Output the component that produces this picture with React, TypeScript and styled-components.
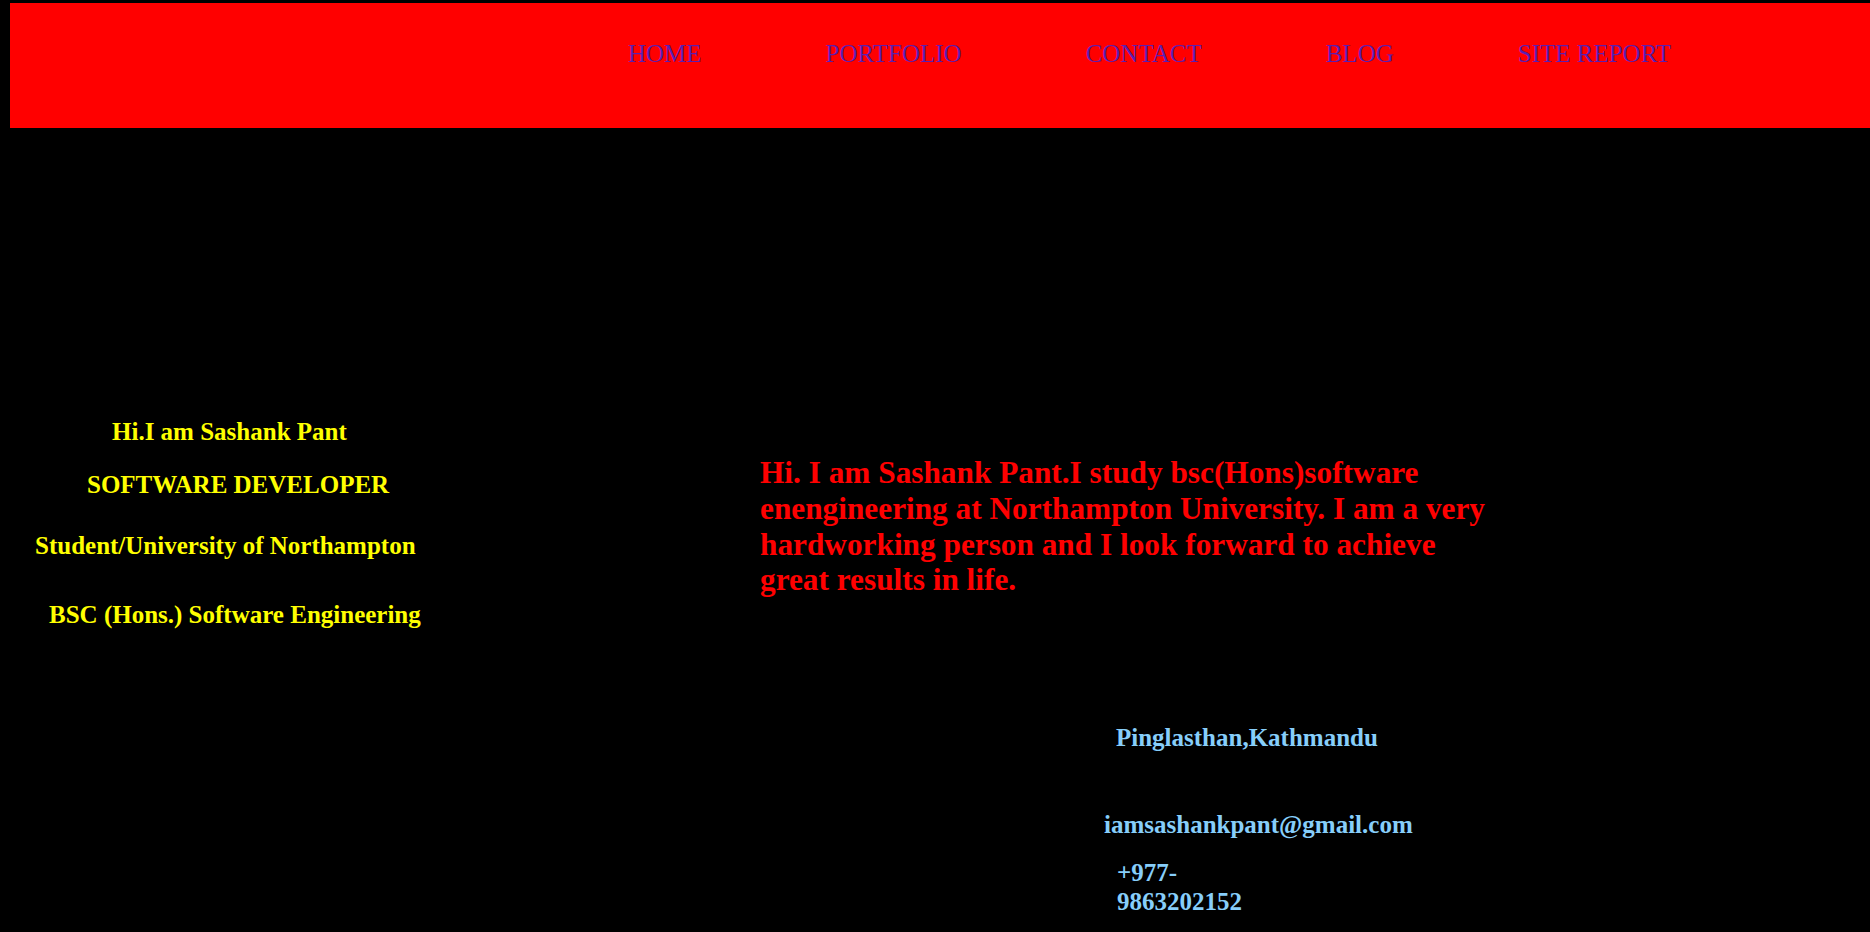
import React from "react";
import styled, { createGlobalStyle } from "styled-components";

const GlobalStyle = createGlobalStyle`
  html, body {
    margin: 0;
    padding: 0;
    background: #000000;
    overflow: hidden;
  }
  body {
    font-family: "Liberation Serif", "Times New Roman", serif;
  }
`;

const Page = styled.div`
  min-height: 932px;
  background: #000000;
`;

const Header = styled.header`
  margin: 3px 0 0 10px;
  height: 125px;
  background: #ff0000;
  display: flex;
  align-items: flex-start;
  padding: 36px 0 0 618px;
  box-sizing: border-box;
`;

const Nav = styled.nav`
  display: flex;
  gap: 124px;
`;

const NavLink = styled.a`
  font-family: "Liberation Serif", "Times New Roman", serif;
  font-size: 25px;
  line-height: 29px;
  color: #5b1fb0;
  text-decoration: none;
  white-space: nowrap;
`;

const Main = styled.main`
  display: flex;
  align-items: flex-start;
`;

const LeftCol = styled.section`
  width: 760px;
  flex: none;
  padding-top: 289px;
  display: flex;
  flex-direction: column;
`;

const IntroLine = styled.p<{ $indent: number; $gap: number }>`
  margin: ${(p) => p.$gap}px 0 0 ${(p) => p.$indent}px;
  font-family: "Liberation Serif", "Times New Roman", serif;
  font-weight: bold;
  font-size: 25px;
  line-height: 29px;
  color: #ffff00;
  white-space: nowrap;
`;

const RightCol = styled.section`
  padding-top: 327px;
  display: flex;
  flex-direction: column;
  align-items: flex-start;
`;

const About = styled.p`
  margin: 0;
  width: 740px;
  font-family: "Liberation Serif", "Times New Roman", serif;
  font-weight: bold;
  font-size: 31.3px;
  line-height: 35.8px;
  color: #ff0000;
`;

const Contact = styled.p<{ $indent: number; $gap: number; $width?: number }>`
  margin: ${(p) => p.$gap}px 0 0 ${(p) => p.$indent}px;
  ${(p) => (p.$width ? `width: ${p.$width}px;` : "white-space: nowrap;")}
  font-family: "Liberation Serif", "Times New Roman", serif;
  font-weight: bold;
  font-size: 25px;
  line-height: 29px;
  color: #87cefa;
`;

const navItems = ["HOME", "PORTFOLIO", "CONTACT", "BLOG", "SITE REPORT"];

const intro = [
  { text: "Hi.I am Sashank Pant", indent: 112, gap: 0 },
  { text: "SOFTWARE DEVELOPER", indent: 87, gap: 24 },
  { text: "Student/University of Northampton", indent: 35, gap: 32 },
  { text: "BSC (Hons.) Software Engineering", indent: 49, gap: 40 },
];

export default function App() {
  return (
    <Page>
      <GlobalStyle />
      <Header>
        <Nav>
          {navItems.map((item) => (
            <NavLink key={item} href="#">
              {item}
            </NavLink>
          ))}
        </Nav>
      </Header>
      <Main>
        <LeftCol>
          {intro.map((l) => (
            <IntroLine key={l.text} $indent={l.indent} $gap={l.gap}>
              {l.text}
            </IntroLine>
          ))}
        </LeftCol>
        <RightCol>
          <About>
            Hi. I am Sashank Pant.I study bsc(Hons)software enengineering at
            Northampton University. I am a very hardworking person and I look
            forward to achieve great results in life.
          </About>
          <Contact $indent={356} $gap={125}>
            Pinglasthan,Kathmandu
          </Contact>
          <Contact $indent={344} $gap={58}>
            iamsashankpant@gmail.com
          </Contact>
          <Contact $indent={357} $gap={19} $width={150}>
            +977-9863202152
          </Contact>
        </RightCol>
      </Main>
    </Page>
  );
}
